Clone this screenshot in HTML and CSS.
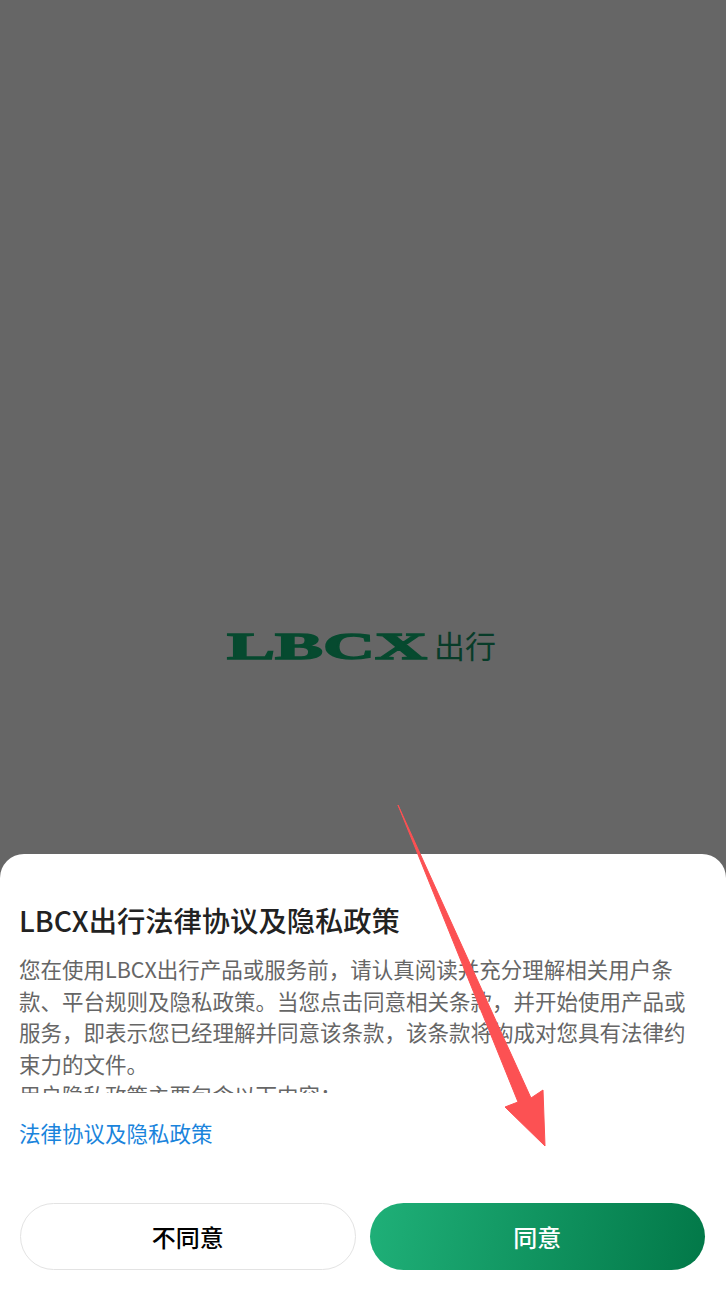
FILE: index.html
```html
<!DOCTYPE html>
<html lang="zh-CN">
<head>
<meta charset="utf-8">
<title>LBCX出行</title>
<link rel="stylesheet" href="styles.css">
</head>
<body>
<main class="screen">
  <section class="splash">
    <div class="logo">
      <svg class="logo-mark" width="200" height="30" viewBox="0 0 200 30"><text class="logo-latin" x="0" y="28" textLength="200" lengthAdjust="spacingAndGlyphs">LBCX</text></svg>
      <span class="logo-cn">出行</span>
    </div>
  </section>
  <section class="sheet">
    <h1 class="title">LBCX出行法律协议及隐私政策</h1>
    <div class="scroll">
      <p class="para">您在使用LBCX出行产品或服务前，请认真阅读并充分理解相关用户条款、平台规则及隐私政策。当您点击同意相关条款，并开始使用产品或服务，即表示您已经理解并同意该条款，该条款将构成对您具有法律约束力的文件。</p>
      <p class="para">用户隐私政策主要包含以下内容：</p>
    </div>
    <a class="link">法律协议及隐私政策</a>
    <div class="actions">
      <button class="btn btn-ghost">不同意</button>
      <button class="btn btn-primary">同意</button>
    </div>
  </section>
  <svg class="arrow" width="726" height="1290" viewBox="0 0 726 1290"><polygon points="398,805 531,1098 543,1090 545,1146 505,1107 518,1102"/></svg>
</main>
</body>
</html>
```
FILE: styles.css
```css
* { box-sizing: border-box; }
html, body { margin: 0; padding: 0; }
body { font-family: "Noto Sans CJK SC", sans-serif; background: #666; }
.screen { position: relative; width: 726px; height: 1290px; display: flex; flex-direction: column; overflow: hidden; background: #666; }
.splash { height: 854px; flex: none; padding: 630px 0 0 227px; }
.logo { display: flex; align-items: center; gap: 7px; height: 32px; }
.logo-mark { display: block; flex: none; overflow: visible; }
.logo-latin { font-family: "Liberation Serif", serif; font-weight: 700; font-size: 38px; fill: #064a2f; stroke: #064a2f; stroke-width: 1.4; }
.logo-cn { font-family: "Noto Sans CJK SC", sans-serif; font-weight: 400; font-size: 31px; line-height: 32px; margin-top: -3px; color: #083c29; white-space: nowrap; }
.sheet { flex: 1; background: #fff; border-radius: 24px 24px 0 0; padding: 49px 21px 0 19px; display: flex; flex-direction: column; }
.title { margin: 0; font-size: 28.3px; line-height: 34px; font-weight: 500; color: #222; }
.scroll { margin-top: 16px; height: 140px; overflow: hidden; padding-right: 15px; }
.para { margin: 0; font-size: 21.5px; line-height: 31.6px; color: #666; }
.link { display: block; margin-top: 24px; font-size: 21.5px; line-height: 32px; color: #1a84dc; }
.actions { margin: 54px 0 0 1px; display: grid; grid-template-columns: 1fr 1fr; gap: 14px; }
.btn { padding: 0; height: 67px; border-radius: 34px; font-family: inherit; font-size: 24px; font-weight: 500; }
.btn-ghost { background: #fff; border: 1px solid #e3e3e3; color: #000; }
.btn-primary { background: linear-gradient(100deg, #1fb078, #027848); border: none; color: #fff; }
.arrow { position: absolute; left: 0; top: 0; pointer-events: none; }
.arrow polygon { fill: #fc5153; stroke: #fc5153; stroke-width: 1; stroke-linejoin: round; }
```
